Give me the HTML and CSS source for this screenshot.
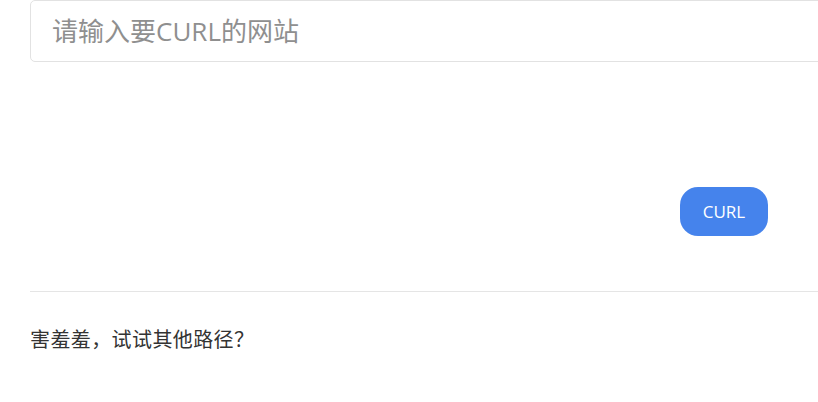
FILE: index.html
```html
<!DOCTYPE html>
<html>
<head>
    <meta charset="UTF-8">
    <title>CURL</title>
    <link rel="stylesheet" href="styles.css">
</head>
<body>
    <div class="container">
        <form class="curl-form">
            <input class="url-input" type="text" placeholder="请输入要CURL的网站">
            <div class="actions">
                <button class="button" type="button">CURL</button>
            </div>
        </form>
        <hr class="divider">
        <p class="message">害羞羞，试试其他路径？</p>
    </div>
</body>
</html>
```

FILE: styles.css
```css
html, body {
    margin: 0;
    padding: 0;
    overflow: hidden;
    background-color: #fff;
}
body {
    font-family: "Open Sans", "Noto Sans CJK SC", sans-serif;
    color: #333;
}
.container {
    width: 860px;
    padding-left: 30px;
}
.curl-form {
    margin: 0;
}
.url-input {
    display: block;
    box-sizing: border-box;
    width: 100%;
    height: 62px;
    margin: 0;
    padding: 0 21px;
    border: 1px solid #e2e2e2;
    border-radius: 5px;
    font-family: "Open Sans", "Noto Sans CJK SC", sans-serif;
    font-size: 26px;
    color: #333;
    outline: none;
}
.url-input::placeholder {
    color: #8f8f8f;
}
.actions {
    display: flex;
    justify-content: flex-end;
    padding-top: 125px;
    padding-right: 122px;
}
.button {
    width: 88px;
    height: 49px;
    border: none;
    border-radius: 18px;
    background-color: #4583ec;
    color: #fff;
    font-family: "Open Sans", sans-serif;
    font-size: 17px;
    cursor: pointer;
}
.divider {
    margin: 55px 0 0;
    border: none;
    border-top: 1px solid #e5e5e5;
}
.message {
    margin: 32px 0 0;
    font-family: "Noto Sans CJK SC", sans-serif;
    font-size: 20px;
    line-height: 30px;
    letter-spacing: 0.4px;
    color: #333;
}
```
